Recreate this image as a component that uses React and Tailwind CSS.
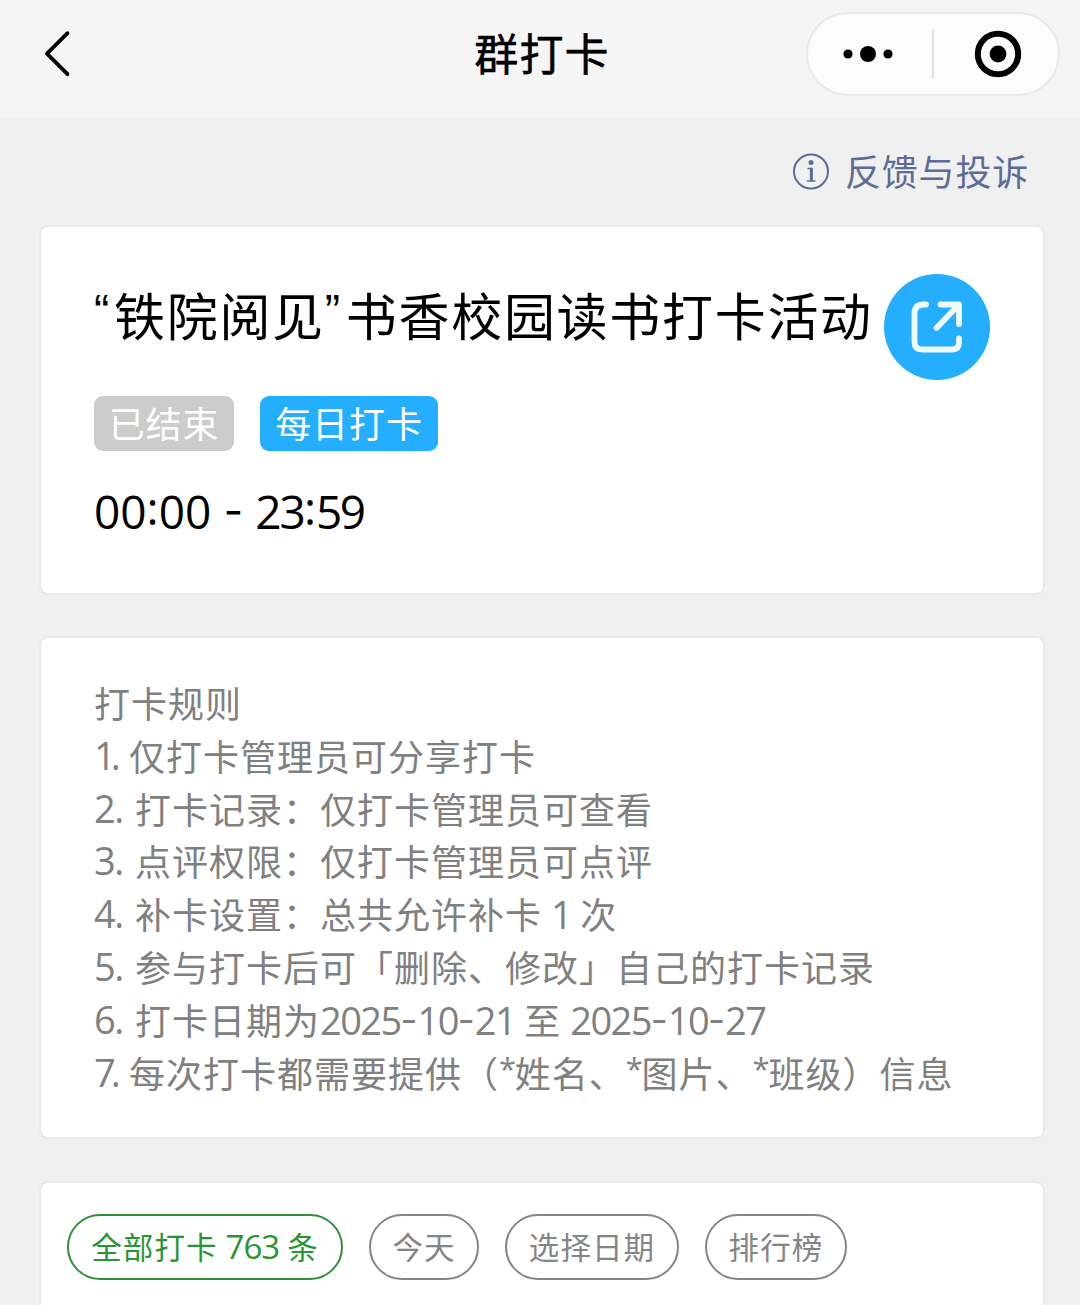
import React from 'react';

const rules = [
    { no: '1.', wide: false, text: '仅打卡管理员可分享打卡' },
    { no: '2.', wide: true, text: '打卡记录：仅打卡管理员可查看' },
    { no: '3.', wide: true, text: '点评权限：仅打卡管理员可点评' },
    { no: '4.', wide: true, text: '补卡设置：总共允许补卡 1 次' },
    { no: '5.', wide: true, text: '参与打卡后可「删除、修改」自己的打卡记录' },
    { no: '6.', wide: true, text: '打卡日期为2025-10-21 至 2025-10-27' },
    { no: '7.', wide: false, text: '每次打卡都需要提供（*姓名、*图片、*班级）信息' },
];

const filters = [
    { label: '全部打卡 763 条', className: 'w-[276px] border-[#2f8f35] text-[#2a9433]' },
    { label: '今天', className: 'w-[110px] border-[#858585] text-[#858585]' },
    { label: '选择日期', className: 'w-[174px] border-[#858585] text-[#858585]' },
    { label: '排行榜', className: 'w-[142px] border-[#858585] text-[#858585]' },
];

// Digits and dashes use their own fonts inside Chinese text
const MixedText = ({ text, digitClass }) =>
    text.split(/(\d+|-|\*)/).map((part, i) => {
        if (/^\d+$/.test(part)) {
            return <span key={i} className={digitClass}>{part}</span>;
        }
        if (part === '-') {
            return <span key={i} className="font-['Inter',sans-serif] text-[37px] tracking-[0px] align-[2px] leading-none">-</span>;
        }
        if (part === '*') {
            return <span key={i} className="font-['Open_Sans',sans-serif] text-[31px] tracking-[-1.3px] align-[8px] leading-none">*</span>;
        }
        return part;
    });

const Header = () => (
    <header className="flex h-[118px] items-start justify-between bg-[#f5f5f5] pl-[40px] pr-[20px] pt-[12px]">
        <div className="flex h-[84px] w-[238px] items-center">
            <svg width="34" height="50" viewBox="0 0 34 50" fill="none" stroke="#000" strokeWidth="3.8" strokeLinecap="round" strokeLinejoin="round">
                <path d="M27.5 4.2 7 24.6l20.5 20.6" />
            </svg>
        </div>
        <h1 className="flex h-[84px] items-center pb-[4px] text-[44px] tracking-[1.2px] text-black [-webkit-text-stroke:0.5px_black]">群打卡</h1>
        <div className="flex h-[84px] w-[254px] items-center rounded-full border-2 border-[#e9e9e9] bg-[#fcfcfc]">
            <div className="flex w-[124px] justify-center pr-[3px]">
                <svg width="52" height="20" viewBox="0 0 52 20">
                    <circle cx="6" cy="10" r="4.6" />
                    <circle cx="26" cy="10" r="8" />
                    <circle cx="46" cy="10" r="4.6" />
                </svg>
            </div>
            <div className="h-[50px] w-[2px] bg-[#e3e3e3]" />
            <div className="flex flex-1 justify-center">
                <svg width="48" height="48" viewBox="0 0 48 48" className="ml-[4px]">
                    <circle cx="24" cy="24" r="20.2" fill="none" stroke="#000" strokeWidth="6" />
                    <circle cx="24" cy="24" r="8.4" />
                </svg>
            </div>
        </div>
    </header>
);

const App = () => {
    return (
        <div className="h-[1305px] overflow-hidden bg-[#f0f0f0] font-['Noto_Sans_CJK_SC',sans-serif]">
            <Header />

            <div className="flex h-[107px] items-center justify-end gap-[15px] pr-[51px] text-[#5d6c96]">
                <svg width="38" height="38" viewBox="0 0 38 38" fill="none" stroke="currentColor" strokeWidth="2">
                    <circle cx="19" cy="18.500" r="17" />
                    <circle cx="19" cy="9.500" r="2.500" fill="currentColor" stroke="none" />
                    <path d="M15.500 15.500h4.200M15 28h8.500" strokeWidth="1.5" />
                    <path d="M19.400 14.800v13" strokeWidth="3" />
                </svg>
                <span className="pb-[3px] text-[36px] tracking-[0.8px]">反馈与投诉</span>
            </div>

            <main className="flex flex-col gap-[41px] pl-[39px] pr-[35px]">
                <section className="h-[370px] rounded-[9px] border-2 border-[#e9e9e9] bg-white pl-[53px] pr-[53px] pt-[47px]">
                    <div className="flex items-start justify-between">
                        <h2 className="flex h-[84px] items-center whitespace-nowrap pb-[3px] text-[51px] tracking-[1.7px] text-black">
                            <span className="w-[20px] pb-[6px] font-['Liberation_Sans',sans-serif] text-[46px] tracking-[0px]">“</span>
                            铁院阅见
                            <span className="w-[21px] pb-[6px] font-['Liberation_Sans',sans-serif] text-[46px] tracking-[0px]">”</span>
                            书香校园读书打卡活动
                        </h2>
                        <button className="flex h-[106px] w-[106px] shrink-0 items-center justify-center rounded-full bg-[#25aefe]">
                            <svg width="54" height="54" viewBox="0 0 54 54" fill="none" stroke="#eefaff" strokeWidth="5.8" strokeLinecap="round" strokeLinejoin="round">
                                <path d="M16 4.500h-2.500Q4.500 4.500 4.500 13.500V42q0 7.500 7.500 7.500h30q7 0 7-7V38.500" />
                                <path d="M30.500 4.500H49V24" />
                                <path d="M48 5.500 26.500 28" />
                            </svg>
                        </button>
                    </div>
                    <div className="mt-[16px] flex gap-[26px] text-[36px] tracking-[0.9px] text-white">
                        <span className="flex h-[55px] w-[140px] items-center justify-center rounded-[9px] bg-[#cccccc] pb-[3px]">已结束</span>
                        <span className="flex h-[55px] w-[178px] items-center justify-center rounded-[9px] bg-[#25aefe] pb-[3px]">每日打卡</span>
                    </div>
                    <p className="mt-[30px] flex h-[60px] items-center whitespace-pre font-['Open_Sans',sans-serif] text-[46px] leading-[60px] text-black">
                        00<span className="pb-[9px]">:</span>00<span className="w-[44px] text-center font-['Inter',sans-serif] text-[42px]">-</span><span className="tracking-[-2px]">23</span><span className="pb-[9px]">:</span><span className="tracking-[-2.5px]">59</span>
                    </p>
                </section>

                <section className="h-[503px] rounded-[9px] border-2 border-[#e9e9e9] bg-white pl-[53px] pt-[38px] text-[36px] leading-[52.8px] tracking-[1px] text-[#808080]">
                    <h3>打卡规则</h3>
                    <ol>
                        {rules.map((rule) => (
                            <li key={rule.no} className="flex h-[52.8px] whitespace-pre">
                                <span
                                    className={`shrink-0 font-['Open_Sans',sans-serif] text-[38px] ${rule.wide ? 'w-[41px] tracking-[-1.5px]' : 'w-[35px] tracking-[-5px]'}`}
                                >
                                    {rule.no}
                                </span>
                                <span>
                                    <MixedText text={rule.text} digitClass="font-['Open_Sans',sans-serif] text-[38px] tracking-[-1.6px] leading-none" />
                                </span>
                            </li>
                        ))}
                    </ol>
                </section>

                <section className="mt-[1px] h-[200px] rounded-[9px] border-2 border-[#e9e9e9] bg-white px-[26px] pt-[31px]">
                    <div className="flex gap-[26px]">
                        {filters.map((filter) => (
                            <button
                                key={filter.label}
                                className={`flex h-[66px] shrink-0 items-center justify-center whitespace-pre rounded-full border-2 text-[30.5px] tracking-[1.1px] ${filter.className}`}
                            >
                                <span>
                                    <MixedText text={filter.label} digitClass="font-['Open_Sans',sans-serif] text-[33px] tracking-[-1px] leading-none" />
                                </span>
                            </button>
                        ))}
                    </div>
                </section>
            </main>
        </div>
    );
};

export default App;
